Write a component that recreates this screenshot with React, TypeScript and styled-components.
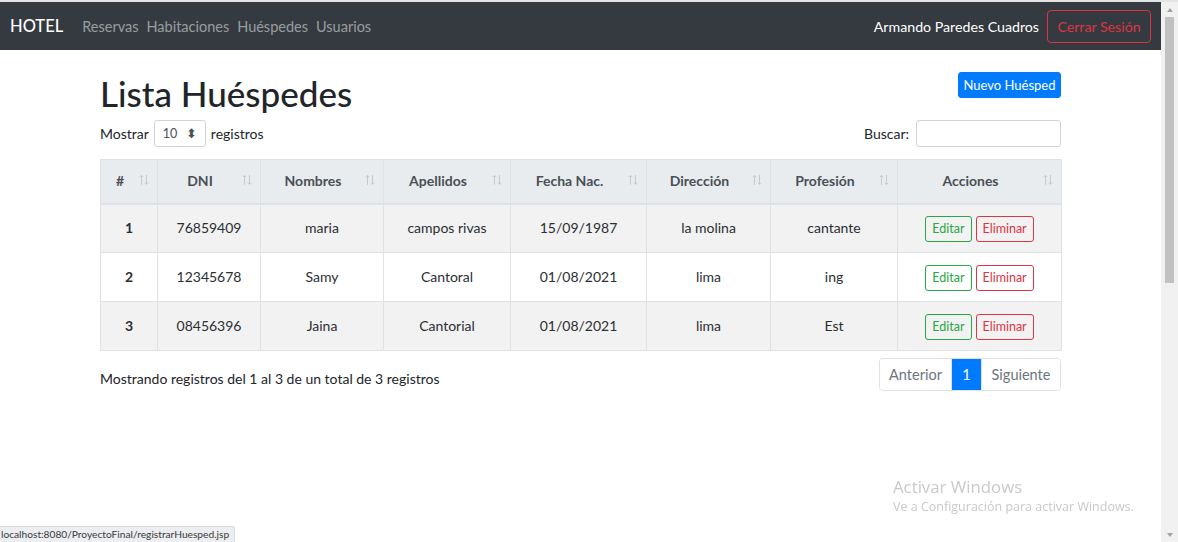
import React from "react";
import styled, { createGlobalStyle } from "styled-components";

const GlobalStyle = createGlobalStyle`
  html, body { margin: 0; padding: 0; overflow: hidden; }
  body { font-family: Lato, "Noto Sans", sans-serif; color: #212529; background: #fff; }
  * { box-sizing: border-box; }
`;

const Page = styled.div`
  display: flex;
  width: 1178px;
  height: 542px;
  border-top: 2px solid #e4e4e4;
`;

const Main = styled.div`
  flex: 1;
  display: flex;
  flex-direction: column;
  min-width: 0;
`;

const Navbar = styled.nav`
  height: 48px;
  background: #343a40;
  display: flex;
  align-items: center;
  padding: 0 10px 0 10px;
`;

const Brand = styled.a`
  color: #fff;
  font-size: 16.5px;
  font-weight: 500;
  margin-right: 15px;
`;

const NavLink = styled.a`
  color: rgba(255, 255, 255, 0.5);
  font-size: 14.5px;
  padding: 0 4px;
`;

const NavRight = styled.div`
  margin-left: auto;
  display: flex;
  align-items: center;
  gap: 8px;
`;

const UserName = styled.span`
  color: #fff;
  font-size: 14.2px;
`;

const OutlineDanger = styled.button`
  background: transparent;
  border: 1px solid #dc3545;
  color: #dc3545;
  border-radius: 4px;
  font-family: inherit;
  font-size: 14.2px;
  height: 33px;
  width: 104px;
  padding: 0;
`;

const Container = styled.div`
  width: 961px;
  margin-left: 100px;
  display: flex;
  flex-direction: column;
`;

const HeaderRow = styled.div`
  display: flex;
  justify-content: space-between;
  align-items: flex-start;
  height: 70px;
  padding-top: 22px;
`;

const Title = styled.h1`
  margin: 0;
  font-size: 35px;
  font-weight: 500;
  line-height: 43px;
  color: #212529;
`;

const PrimaryBtn = styled.button`
  background: #007bff;
  border: 1px solid #007bff;
  color: #fff;
  font-family: inherit;
  font-size: 13px;
  border-radius: 3px;
  height: 26px;
  width: 103px;
  padding: 0;
`;

const Controls = styled.div`
  display: flex;
  justify-content: space-between;
  align-items: center;
  height: 27px;
  font-size: 14px;
  color: #212529;
`;

const Label = styled.label`
  display: flex;
  align-items: center;
  gap: 5px;
`;

const SelectBox = styled.div`
  width: 52px;
  height: 27px;
  border: 1px solid #ced4da;
  border-radius: 3px;
  display: flex;
  align-items: center;
  justify-content: space-between;
  padding: 0 8px 0 8px;
  font-size: 12.5px;
  color: #495057;
`;

const SearchInput = styled.input`
  width: 145px;
  height: 27px;
  border: 1px solid #ced4da;
  border-radius: 3px;
  margin-left: 2px;
`;

const Table = styled.table`
  margin-top: 12px;
  width: 961px;
  border-collapse: collapse;
  table-layout: fixed;
  font-size: 14px;
  border: 1px solid #dee2e6;
`;

const Col = styled.col<{ $w: number }>`
  width: ${(p) => p.$w}px;
`;

const Th = styled.th`
  position: relative;
  background: #e9ecef;
  color: #495057;
  font-weight: 700;
  height: 44px;
  padding: 0 30px 0 12px;
  border: 1px solid #dee2e6;
  border-bottom: 2px solid #dee2e6;
  text-align: center;
  line-height: 24px;
`;

const SortIcon = styled.svg`
  position: absolute;
  right: 8px;
  top: 50%;
  transform: translateY(-60%);
`;

const Tr = styled.tr<{ $striped: boolean }>`
  background: ${(p) => (p.$striped ? "#f2f2f2" : "#fff")};
`;

const Td = styled.td<{ $bold?: boolean }>`
  height: 49px;
  padding: 0 12px;
  border: 1px solid #dee2e6;
  text-align: center;
  line-height: 24px;
  color: #2b2f33;
  font-weight: ${(p) => (p.$bold ? 700 : 400)};
`;

const Actions = styled.div`
  display: flex;
  justify-content: center;
  gap: 4px;
  padding-top: 1px;
`;

const SmallOutline = styled.button<{ $color: string }>`
  background: transparent;
  border: 1px solid ${(p) => p.$color};
  color: ${(p) => p.$color};
  font-family: inherit;
  font-size: 12.5px;
  border-radius: 3px;
  height: 26px;
  padding: 0 6px;
`;

const Footer = styled.div`
  margin-top: 7px;
  display: flex;
  justify-content: space-between;
  align-items: flex-start;
  font-size: 14px;
`;

const Info = styled.div`
  padding-top: 12px;
  line-height: 18px;
`;

const Pagination = styled.div`
  display: flex;
  height: 33px;
  border: 1px solid #dee2e6;
  border-radius: 4px;
  overflow: hidden;
`;

const PageItem = styled.span<{ $active?: boolean; $w: number }>`
  width: ${(p) => p.$w}px;
  display: flex;
  align-items: center;
  justify-content: center;
  background: ${(p) => (p.$active ? "#007bff" : "#fff")};
  color: ${(p) => (p.$active ? "#fff" : "#6c757d")};
  font-size: 14.5px;
  & + & { border-left: 1px solid #dee2e6; }
`;

const Scrollbar = styled.div`
  width: 17px;
  background: #f1f1f1;
  display: flex;
  flex-direction: column;
  align-items: center;
`;

const ScrollArrow = styled.div<{ $down?: boolean }>`
  height: 15px;
  width: 17px;
  display: flex;
  align-items: center;
  justify-content: center;
  &::before {
    content: "";
    border-left: 3.5px solid transparent;
    border-right: 3.5px solid transparent;
    ${(p) => (p.$down ? "border-top: 4px solid #a3a3a3;" : "border-bottom: 4px solid #a3a3a3;")}
  }
`;

const Thumb = styled.div`
  width: 9px;
  height: 266px;
  background: #c1c1c1;
`;

const ScrollSpace = styled.div`
  flex: 1;
`;

const Watermark = styled.div`
  position: fixed;
  left: 893px;
  top: 476px;
  color: #c9c9c9;
  font-family: "Open Sans", sans-serif;
`;

const WmTitle = styled.div`
  font-size: 16.8px;
  line-height: 22px;
`;

const WmSub = styled.div`
  font-size: 12.5px;
  line-height: 18px;
`;

const StatusBar = styled.div`
  position: fixed;
  left: 0;
  bottom: 0;
  height: 16px;
  padding: 0 5px 0 1px;
  background: #eceef1;
  border: 1px solid #d6d9dd;
  border-left: none;
  border-bottom: none;
  border-top-right-radius: 3px;
  font-family: Lato, sans-serif;
  font-size: 10.2px;
  line-height: 15px;
  color: #3a3a3a;
`;

const cols = [57, 103, 123, 127, 136, 124, 127, 164];
const headers = ["#", "DNI", "Nombres", "Apellidos", "Fecha Nac.", "Dirección", "Profesión", "Acciones"];
const rows = [
  ["1", "76859409", "maria", "campos rivas", "15/09/1987", "la molina", "cantante"],
  ["2", "12345678", "Samy", "Cantoral", "01/08/2021", "lima", "ing"],
  ["3", "08456396", "Jaina", "Cantorial", "01/08/2021", "lima", "Est"],
];

function SortArrows() {
  return (
    <SortIcon width="10" height="11" viewBox="0 0 10 11" fill="none" stroke="#c6cacd" strokeWidth="1">
      <path d="M2.5 10.5V1M0.8 2.8L2.5 1L4.2 2.8" />
      <path d="M7.5 0.5V10M5.8 8.2L7.5 10L9.2 8.2" />
    </SortIcon>
  );
}

export default function App() {
  return (
    <>
      <GlobalStyle />
      <Page>
        <Main>
          <Navbar>
            <Brand>HOTEL</Brand>
            <NavLink>Reservas</NavLink>
            <NavLink>Habitaciones</NavLink>
            <NavLink>Huéspedes</NavLink>
            <NavLink>Usuarios</NavLink>
            <NavRight>
              <UserName>Armando Paredes Cuadros</UserName>
              <OutlineDanger>Cerrar Sesión</OutlineDanger>
            </NavRight>
          </Navbar>
          <Container>
            <HeaderRow>
              <Title>Lista Huéspedes</Title>
              <PrimaryBtn>Nuevo Huésped</PrimaryBtn>
            </HeaderRow>
            <Controls>
              <Label>
                Mostrar
                <SelectBox>
                  <span>10</span>
                  <span>⬍</span>
                </SelectBox>
                registros
              </Label>
              <Label>
                Buscar:
                <SearchInput />
              </Label>
            </Controls>
            <Table>
              <colgroup>
                {cols.map((w, i) => (
                  <Col key={i} $w={w} />
                ))}
              </colgroup>
              <thead>
                <tr>
                  {headers.map((h) => (
                    <Th key={h}>
                      {h}
                      <SortArrows />
                    </Th>
                  ))}
                </tr>
              </thead>
              <tbody>
                {rows.map((r, i) => (
                  <Tr key={i} $striped={i % 2 === 0}>
                    {r.map((c, j) => (
                      <Td key={j} $bold={j === 0}>
                        {c}
                      </Td>
                    ))}
                    <Td>
                      <Actions>
                        <SmallOutline $color="#28a745">Editar</SmallOutline>
                        <SmallOutline $color="#dc3545">Eliminar</SmallOutline>
                      </Actions>
                    </Td>
                  </Tr>
                ))}
              </tbody>
            </Table>
            <Footer>
              <Info>Mostrando registros del 1 al 3 de un total de 3 registros</Info>
              <Pagination>
                <PageItem $w={71}>Anterior</PageItem>
                <PageItem $w={30} $active>1</PageItem>
                <PageItem $w={79}>Siguiente</PageItem>
              </Pagination>
            </Footer>
          </Container>
        </Main>
        <Scrollbar>
          <ScrollArrow />
          <Thumb />
          <ScrollSpace />
          <ScrollArrow $down />
        </Scrollbar>
      </Page>
      <Watermark>
        <WmTitle>Activar Windows</WmTitle>
        <WmSub>Ve a Configuración para activar Windows.</WmSub>
      </Watermark>
      <StatusBar>localhost:8080/ProyectoFinal/registrarHuesped.jsp</StatusBar>
    </>
  );
}
